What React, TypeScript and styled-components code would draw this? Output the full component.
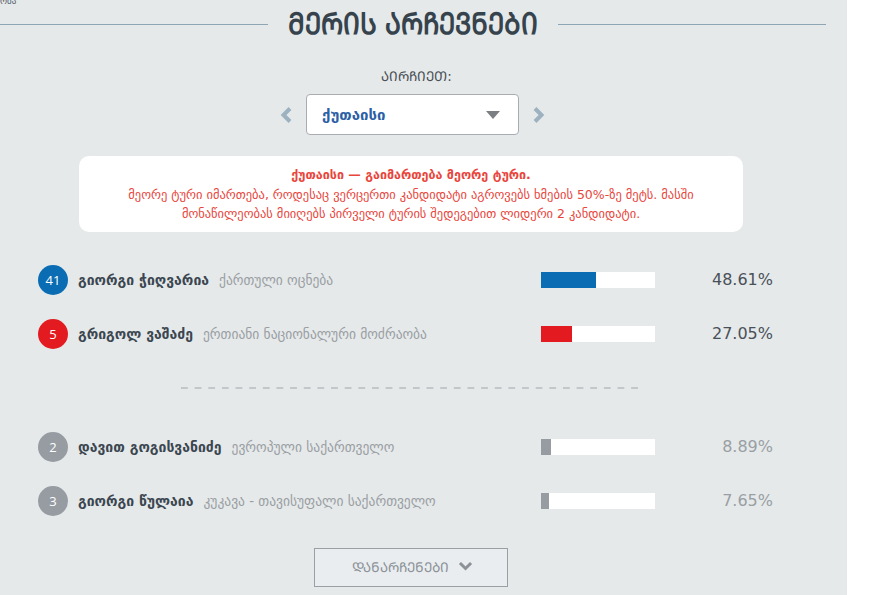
import React from "react";
import styled, { createGlobalStyle } from "styled-components";

const Global = createGlobalStyle`
  html, body {
    margin: 0;
    padding: 0;
    background: #ffffff;
    font-family: "DejaVu Sans", "Noto Sans", sans-serif;
  }
`;

const Page = styled.div`
  width: 847px;
  min-height: 595px;
  background: #e5e9ea;
  overflow: hidden;
  display: flex;
  flex-direction: column;
`;

const Crumb = styled.div`
  font-size: 9px;
  line-height: 10px;
  height: 6px;
  margin-top: -4px;
  color: #55606a;
`;

const TitleRow = styled.div`
  display: flex;
  align-items: center;
  gap: 20px;
  padding-right: 21px;
  height: 44px;
`;

const Line = styled.div`
  flex: 1;
  height: 1px;
  background: #8ea5b3;
`;

const Title = styled.h1`
  margin: 0;
  font-family: "DejaVu Sans Condensed", "DejaVu Sans", sans-serif;
  font-weight: bold;
  font-size: 26.5px;
  line-height: 30px;
  color: #36434d;
  transform: scaleY(1.13);
`;

const Picker = styled.div`
  display: flex;
  flex-direction: column;
  align-items: center;
  margin-top: 21px;
  padding-right: 22px;
`;

const Label = styled.div`
  font-size: 13.5px;
  color: #4a4f55;
  margin-bottom: 9px;
  padding-left: 8px;
`;

const SelectRow = styled.div`
  display: flex;
  align-items: center;
  gap: 13px;
`;

const Arrow = styled.span`
  display: flex;
  color: #9db2c0;
`;

const Select = styled.div`
  box-sizing: border-box;
  width: 213px;
  height: 41px;
  background: #fff;
  border: 1px solid #a9adb1;
  border-radius: 4px;
  display: flex;
  align-items: center;
  justify-content: space-between;
  padding: 0 18px 0 15px;
`;

const SelectValue = styled.span`
  font-weight: bold;
  font-size: 15px;
  color: #2d5fa6;
`;

const Caret = styled.span`
  width: 0;
  height: 0;
  border-left: 7px solid transparent;
  border-right: 7px solid transparent;
  border-top: 8px solid #7b7f83;
`;

const Notice = styled.div`
  box-sizing: border-box;
  width: 664px;
  margin: 21px 0 0 79px;
  padding: 9px 20px 8px;
  background: #fff;
  border-radius: 10px;
  text-align: center;
  color: #e8453c;
  font-size: 12.5px;
  line-height: 19.5px;
`;

const NoticeHead = styled.div`
  font-weight: bold;
`;

const List = styled.div<{ $top: number }>`
  display: flex;
  flex-direction: column;
  padding: 0 74px 0 38px;
  margin-top: ${(p) => p.$top}px;
`;

const Row = styled.div`
  display: grid;
  grid-template-columns: 30px 1fr 114px 118px;
  align-items: center;
  height: 54px;
`;

const Badge = styled.div<{ $color: string }>`
  width: 30px;
  height: 30px;
  border-radius: 50%;
  background: ${(p) => p.$color};
  color: #fff;
  font-family: "Open Sans", sans-serif;
  font-size: 13px;
  display: flex;
  align-items: center;
  justify-content: center;
`;

const Who = styled.div`
  margin-left: 10px;
  display: flex;
  align-items: baseline;
  gap: 10px;
  white-space: nowrap;
`;

const Name = styled.span`
  font-weight: bold;
  font-size: 14px;
  color: #3b4650;
`;

const Party = styled.span`
  font-size: 13.5px;
  color: #9a9ea3;
`;

const Bar = styled.div`
  height: 16px;
  background: #fff;
  display: flex;
`;

const Fill = styled.div<{ $color: string }>`
  height: 100%;
  background: ${(p) => p.$color};
`;

const Percent = styled.div<{ $muted?: boolean }>`
  text-align: right;
  font-family: "DejaVu Sans", sans-serif;
  font-size: 16px;
  color: ${(p) => (p.$muted ? "#9a9fa4" : "#4a5058")};
`;

const Divider = styled.div`
  height: 2px;
  margin: 26px 207px 0 181px;
  background-image: linear-gradient(to right, #c3c7ca 0 7px, transparent 7px 14px);
  background-size: 13.65px 2px;
`;

const MoreWrap = styled.div`
  display: flex;
  justify-content: center;
  padding-right: 26px;
  margin-top: 20px;
`;

const More = styled.button`
  box-sizing: border-box;
  width: 194px;
  height: 39px;
  background: #e9edf0;
  border: 1px solid #9a9fa4;
  border-radius: 0;
  color: #8b9197;
  font-family: "DejaVu Sans Condensed", "DejaVu Sans", sans-serif;
  font-size: 13.5px;
  display: flex;
  align-items: center;
  justify-content: center;
  gap: 9px;
  padding: 0 0 0 4px;
`;

const Chevron = ({ dir }: { dir: "left" | "right" | "down" }) => {
  if (dir === "down") {
    return (
      <svg width="15" height="18" viewBox="0 0 15 18">
        <path d="M3 6 L7.5 10.5 L12 6" fill="none" stroke="currentColor" strokeWidth="3" strokeLinecap="square" />
      </svg>
    );
  }
  const d = dir === "left" ? "M11 2.5 L4.5 9 L11 15.5" : "M3 2.5 L9.5 9 L3 15.5";
  return (
    <svg width="14" height="18" viewBox="0 0 14 18">
      <path d={d} fill="none" stroke="currentColor" strokeWidth="4" strokeLinecap="butt" />
    </svg>
  );
};

const top = [
  { n: "41", name: "გიორგი ჭიღვარია", party: "ქართული ოცნება", pct: 48.61, color: "#0a6db3", fill: 55 },
  { n: "5", name: "გრიგოლ ვაშაძე", party: "ერთიანი ნაციონალური მოძრაობა", pct: 27.05, color: "#e31a1f", fill: 31 },
];

const rest = [
  { n: "2", name: "დავით გოგისვანიძე", party: "ევროპული საქართველო", pct: 8.89, color: "#969ca2", fill: 10 },
  { n: "3", name: "გიორგი წულაია", party: "კუკავა - თავისუფალი საქართველო", pct: 7.65, color: "#969ca2", fill: 8 },
];

type C = (typeof top)[number];

const CandidateRow = ({ c, muted }: { c: C; muted?: boolean }) => (
  <Row>
    <Badge $color={c.color}>{c.n}</Badge>
    <Who>
      <Name>{c.name}</Name>
      <Party>{c.party}</Party>
    </Who>
    <Bar>
      <Fill $color={c.color} style={{ width: c.fill }} />
    </Bar>
    <Percent $muted={muted}>{c.pct.toFixed(2)}%</Percent>
  </Row>
);

export default function App() {
  return (
    <Page>
      <Global />
      <Crumb>ობა</Crumb>
      <TitleRow>
        <Line />
        <Title>ᲛᲔᲠᲘᲡ ᲐᲠᲩᲔᲕᲜᲔᲑᲘ</Title>
        <Line />
      </TitleRow>
      <Picker>
        <Label>ᲐᲘᲠᲩᲘᲔᲗ:</Label>
        <SelectRow>
          <Arrow>
            <Chevron dir="left" />
          </Arrow>
          <Select>
            <SelectValue>ქუთაისი</SelectValue>
            <Caret />
          </Select>
          <Arrow>
            <Chevron dir="right" />
          </Arrow>
        </SelectRow>
      </Picker>
      <Notice>
        <NoticeHead>ქუთაისი — გაიმართება მეორე ტური.</NoticeHead>
        მეორე ტური იმართება, როდესაც ვერცერთი კანდიდატი აგროვებს ხმების 50%-ზე მეტს. მასში
        <br />
        მონაწილეობას მიიღებს პირველი ტურის შედეგებით ლიდერი 2 კანდიდატი.
      </Notice>
      <List $top={21}>
        {top.map((c) => (
          <CandidateRow key={c.n} c={c} />
        ))}
      </List>
      <Divider />
      <List $top={31}>
        {rest.map((c) => (
          <CandidateRow key={c.n} c={c} muted />
        ))}
      </List>
      <MoreWrap>
        <More>
          ᲓᲐᲜᲐᲠᲩᲔᲜᲔᲑᲘ
          <Chevron dir="down" />
        </More>
      </MoreWrap>
    </Page>
  );
}
